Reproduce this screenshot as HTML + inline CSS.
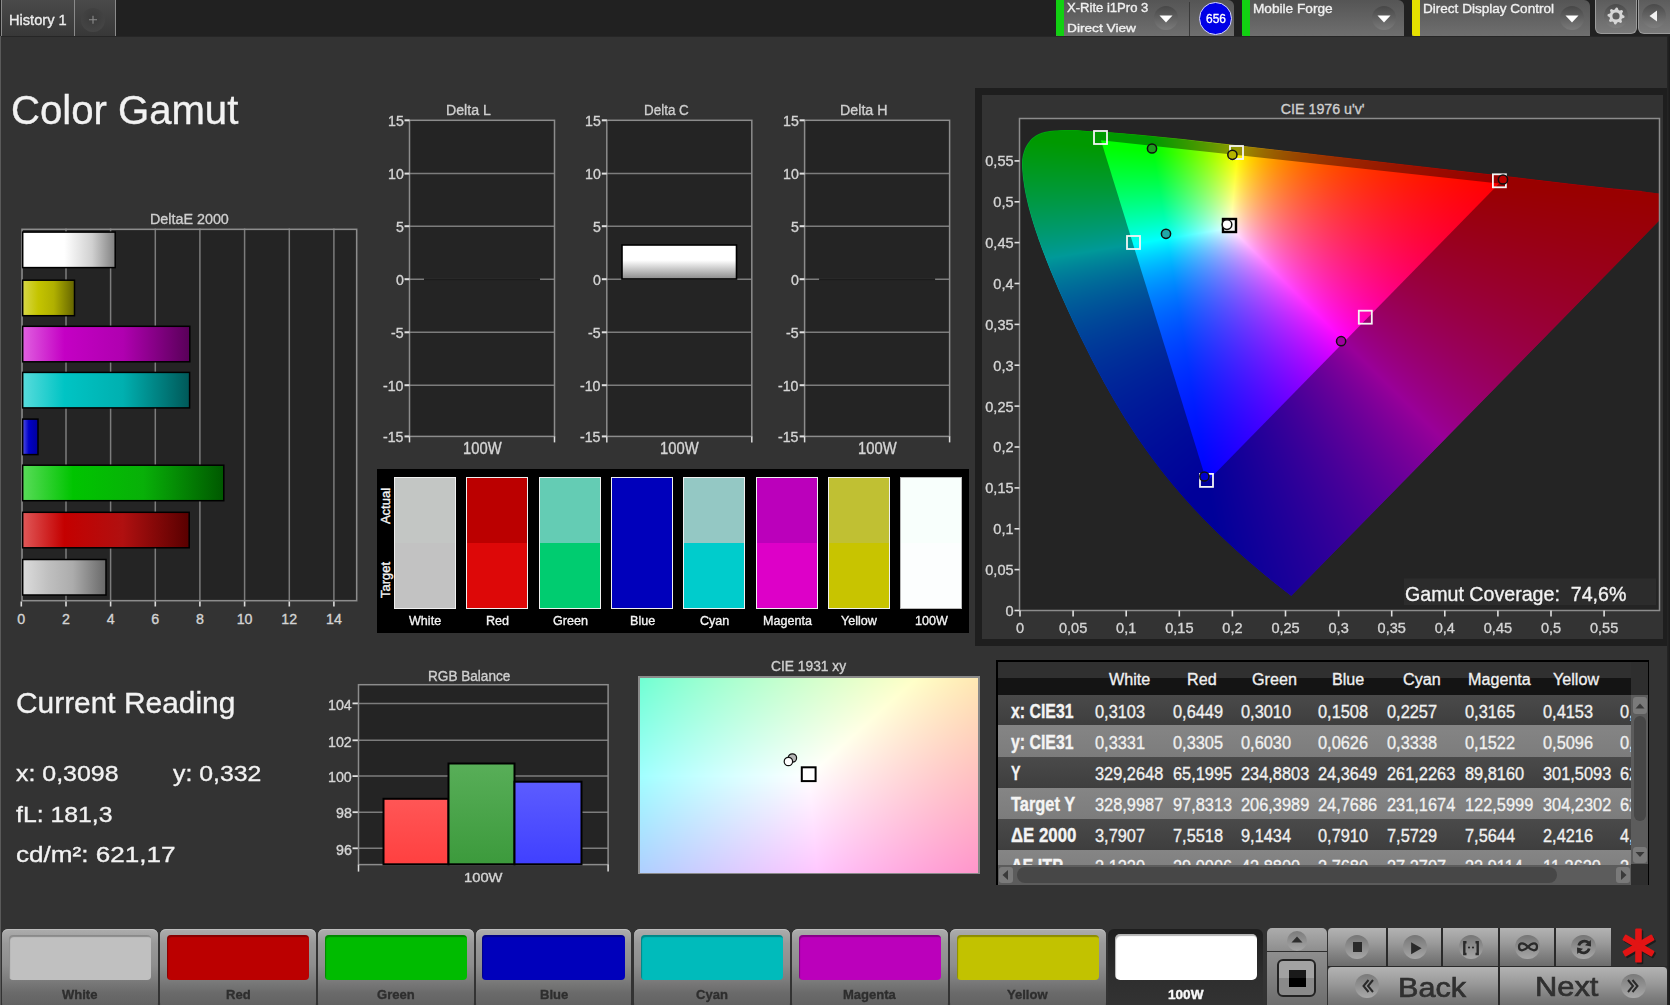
<!DOCTYPE html><html><head><meta charset="utf-8"><style>
*{margin:0;padding:0;box-sizing:border-box}
html,body{width:1670px;height:1005px;overflow:hidden;background:#333;font-family:"Liberation Sans",sans-serif}
.a{position:absolute}
.t{position:absolute;white-space:nowrap;-webkit-text-stroke-width:0.35px}
svg{position:absolute;left:0;top:0}
</style></head><body>
<div class="a" style="left:0;top:0;width:1670px;height:36px;background:#212121"></div>
<div class="a" style="left:0;top:36px;width:1670px;height:1px;background:#262626"></div>
<div class="a" style="left:0;top:36px;width:1px;height:969px;background:#5a5a5a"></div>
<div class="a" style="left:1px;top:-6px;width:115px;height:42px;border:1px solid #8a8a8a;border-bottom:none;border-radius:6px 6px 0 0;background:linear-gradient(#4c4c4c,#383838)"></div>
<div class="a" style="left:74px;top:0;width:1px;height:36px;background:#8a8a8a"></div>
<div class="a" style="left:81px;top:8px;width:24px;height:24px;border-radius:50%;background:radial-gradient(circle at 50% 40%,#3a3a3a,#444 70%,#4a4a4a)"></div>
<div class="t" style="left:9.30px;top:12.56px;font-size:14.10px;line-height:14.10px;color:#ececec;transform:scaleX(1.0373);transform-origin:0 0;">History 1</div>
<svg class="a" style="left:81px;top:8px" width="24" height="24"><path d="M12 7.8V15.8M8 11.8H16" stroke="#8c8c8c" stroke-width="1.1"/></svg>
<div class="a" style="left:1056px;top:0;width:178px;height:36px;border-radius:0 6px 0 0;background:linear-gradient(#555,#6f6f6f)"></div>
<div class="a" style="left:1056px;top:0;width:8px;height:36px;background:#12d012;border-radius:0 0 0 2px"></div>
<div class="a" style="left:1189px;top:2px;width:1px;height:34px;background:#3a3a3a"></div>
<div class="a" style="left:1153.5px;top:6.0px;width:24px;height:24px;border-radius:50%;background:linear-gradient(#474747,#7a7a7a)"></div>
<svg class="a" style="left:1158.5px;top:15.0px" width="14" height="8"><path d="M0.5 0.5H13.5L7 7.5Z" fill="#fff"/></svg>
<div class="t" style="left:1066.80px;top:3.31px;font-size:11.92px;line-height:11.92px;color:#f0f0f0;transform:scaleX(1.0972);transform-origin:0 0;">X-Rite i1Pro 3</div>
<div class="t" style="left:1067.00px;top:22.23px;font-size:11.77px;line-height:11.77px;color:#f0f0f0;transform:scaleX(1.1624);transform-origin:0 0;">Direct View</div>
<div class="a" style="left:1199px;top:1.5px;width:33px;height:33px;border-radius:50%;background:#0000e6;border:1.5px solid #d8d8ff"></div>
<div class="t" style="left:1205.50px;top:12.22px;font-size:13.08px;line-height:13.08px;color:#fff;transform:scaleX(0.9163);transform-origin:0 0;">656</div>
<div class="a" style="left:1242px;top:0;width:162px;height:36px;border-radius:0 6px 0 0;background:linear-gradient(#555,#6f6f6f)"></div>
<div class="a" style="left:1242px;top:0;width:8px;height:36px;background:#12d012;border-radius:0 0 0 2px"></div>
<div class="a" style="left:1372.2px;top:5.6px;width:24px;height:24px;border-radius:50%;background:linear-gradient(#474747,#7a7a7a)"></div>
<svg class="a" style="left:1377.2px;top:14.6px" width="14" height="8"><path d="M0.5 0.5H13.5L7 7.5Z" fill="#fff"/></svg>
<div class="t" style="left:1253.30px;top:2.79px;font-size:12.65px;line-height:12.65px;color:#f0f0f0;transform:scaleX(1.0800);transform-origin:0 0;">Mobile Forge</div>
<div class="a" style="left:1412px;top:0;width:178px;height:36px;border-radius:0 6px 0 0;background:linear-gradient(#555,#6f6f6f)"></div>
<div class="a" style="left:1412px;top:0;width:8px;height:36px;background:#e6e000;border-radius:0 0 0 2px"></div>
<div class="a" style="left:1559.5px;top:5.5px;width:24px;height:24px;border-radius:50%;background:linear-gradient(#474747,#7a7a7a)"></div>
<svg class="a" style="left:1564.5px;top:14.5px" width="14" height="8"><path d="M0.5 0.5H13.5L7 7.5Z" fill="#fff"/></svg>
<div class="t" style="left:1423.40px;top:2.75px;font-size:12.94px;line-height:12.94px;color:#f0f0f0;transform:scaleX(1.0473);transform-origin:0 0;">Direct Display Control</div>
<div class="a" style="left:1595px;top:0;width:42px;height:34px;border-radius:0 0 6px 6px;border:1px solid #9a9a9a;border-top:none;background:linear-gradient(#5c5c5c,#7a7a7a)"></div>
<div class="a" style="left:1638px;top:0;width:40px;height:34px;border-radius:0 0 6px 6px;border:1px solid #9a9a9a;border-top:none;background:linear-gradient(#5c5c5c,#7a7a7a)"></div>
<div class="a" style="left:1604px;top:4px;width:24px;height:24px;border-radius:50%;background:linear-gradient(#4a4a4a,#7e7e7e)"></div>
<div class="a" style="left:1642px;top:4px;width:24px;height:24px;border-radius:50%;background:linear-gradient(#4a4a4a,#7e7e7e)"></div>
<svg class="a" style="left:1604px;top:4px" width="24" height="24"><path d="M12.00 3.50L13.66 3.66L14.49 5.99L15.61 6.60L18.01 5.99L19.07 7.28L18.01 9.51L18.38 10.73L20.50 12.00L20.34 13.66L18.01 14.49L17.40 15.61L18.01 18.01L16.72 19.07L14.49 18.01L13.27 18.38L12.00 20.50L10.34 20.34L9.51 18.01L8.39 17.40L5.99 18.01L4.93 16.72L5.99 14.49L5.62 13.27L3.50 12.00L3.66 10.34L5.99 9.51L6.60 8.39L5.99 5.99L7.28 4.93L9.51 5.99L10.73 5.62Z" fill="#d6d6d6"/><circle cx="12" cy="12" r="3.6" fill="#5e5e5e"/></svg>
<svg class="a" style="left:1642px;top:4px" width="24" height="24"><path d="M7.5 12L15 6.5V17.5Z" fill="#f2f2f2"/></svg>
<div class="t" style="left:11.00px;top:89.92px;font-size:40.84px;line-height:40.84px;color:#f2f2f2;transform:scaleX(0.9822);transform-origin:0 0;">Color Gamut</div>
<div class="t" style="left:150.00px;top:212.15px;font-size:14.83px;line-height:14.83px;color:#cfcfcf;transform:scaleX(0.9657);transform-origin:0 0;">DeltaE 2000</div>
<svg width="1670" height="1005" style="left:0;top:0"><rect x="21.2" y="228.5" width="336.3" height="373.0" fill="#242424"/><line x1="66.0" y1="228.5" x2="66.0" y2="601.5" stroke="#7c7c7c" stroke-width="1.5"/><line x1="110.6" y1="228.5" x2="110.6" y2="601.5" stroke="#7c7c7c" stroke-width="1.5"/><line x1="155.3" y1="228.5" x2="155.3" y2="601.5" stroke="#7c7c7c" stroke-width="1.5"/><line x1="199.9" y1="228.5" x2="199.9" y2="601.5" stroke="#7c7c7c" stroke-width="1.5"/><line x1="244.6" y1="228.5" x2="244.6" y2="601.5" stroke="#7c7c7c" stroke-width="1.5"/><line x1="289.3" y1="228.5" x2="289.3" y2="601.5" stroke="#7c7c7c" stroke-width="1.5"/><line x1="333.9" y1="228.5" x2="333.9" y2="601.5" stroke="#7c7c7c" stroke-width="1.5"/><rect x="22.0" y="229.3" width="334.7" height="371.4" fill="none" stroke="#8c8c8c" stroke-width="1.6"/><line x1="21.3" y1="601.5" x2="21.3" y2="606.5" stroke="#dcdcdc" stroke-width="1.6"/><line x1="66.0" y1="601.5" x2="66.0" y2="606.5" stroke="#dcdcdc" stroke-width="1.6"/><line x1="110.6" y1="601.5" x2="110.6" y2="606.5" stroke="#dcdcdc" stroke-width="1.6"/><line x1="155.3" y1="601.5" x2="155.3" y2="606.5" stroke="#dcdcdc" stroke-width="1.6"/><line x1="199.9" y1="601.5" x2="199.9" y2="606.5" stroke="#dcdcdc" stroke-width="1.6"/><line x1="244.6" y1="601.5" x2="244.6" y2="606.5" stroke="#dcdcdc" stroke-width="1.6"/><line x1="289.3" y1="601.5" x2="289.3" y2="606.5" stroke="#dcdcdc" stroke-width="1.6"/><line x1="333.9" y1="601.5" x2="333.9" y2="606.5" stroke="#dcdcdc" stroke-width="1.6"/><defs><linearGradient id="g232" x1="0" x2="1" y1="0" y2="0"><stop offset="0%" stop-color="#ffffff"/><stop offset="45%" stop-color="#ffffff"/><stop offset="75%" stop-color="#d0d0d0"/><stop offset="100%" stop-color="#808080"/></linearGradient></defs><rect x="22.7" y="232.1" width="92.5" height="35.5" fill="url(#g232)" stroke="#000" stroke-width="1.5"/><defs><linearGradient id="g280" x1="0" x2="1" y1="0" y2="0"><stop offset="0%" stop-color="#d8d848"/><stop offset="30%" stop-color="#c4c400"/><stop offset="60%" stop-color="#b0b000"/><stop offset="100%" stop-color="#646400"/></linearGradient></defs><rect x="22.7" y="280.2" width="51.8" height="35.5" fill="url(#g280)" stroke="#000" stroke-width="1.5"/><defs><linearGradient id="g326" x1="0" x2="1" y1="0" y2="0"><stop offset="0%" stop-color="#e060e0"/><stop offset="25%" stop-color="#c400c4"/><stop offset="60%" stop-color="#b000b0"/><stop offset="100%" stop-color="#580058"/></linearGradient></defs><rect x="22.7" y="326.3" width="167.1" height="35.5" fill="url(#g326)" stroke="#000" stroke-width="1.5"/><defs><linearGradient id="g372" x1="0" x2="1" y1="0" y2="0"><stop offset="0%" stop-color="#58dcdc"/><stop offset="25%" stop-color="#00c4c4"/><stop offset="60%" stop-color="#00b0b0"/><stop offset="100%" stop-color="#005858"/></linearGradient></defs><rect x="22.7" y="372.4" width="166.9" height="35.5" fill="url(#g372)" stroke="#000" stroke-width="1.5"/><defs><linearGradient id="g419" x1="0" x2="1" y1="0" y2="0"><stop offset="0%" stop-color="#5050e0"/><stop offset="40%" stop-color="#0000c8"/><stop offset="100%" stop-color="#00009a"/></linearGradient></defs><rect x="22.7" y="419.1" width="15.3" height="35.5" fill="url(#g419)" stroke="#000" stroke-width="1.5"/><defs><linearGradient id="g465" x1="0" x2="1" y1="0" y2="0"><stop offset="0%" stop-color="#58dc58"/><stop offset="25%" stop-color="#00c400"/><stop offset="60%" stop-color="#08b008"/><stop offset="100%" stop-color="#005800"/></linearGradient></defs><rect x="22.7" y="465.2" width="201.1" height="35.5" fill="url(#g465)" stroke="#000" stroke-width="1.5"/><defs><linearGradient id="g512" x1="0" x2="1" y1="0" y2="0"><stop offset="0%" stop-color="#e05858"/><stop offset="25%" stop-color="#c40000"/><stop offset="60%" stop-color="#b01010"/><stop offset="100%" stop-color="#580000"/></linearGradient></defs><rect x="22.7" y="512.3" width="166.5" height="35.5" fill="url(#g512)" stroke="#000" stroke-width="1.5"/><defs><linearGradient id="g559" x1="0" x2="1" y1="0" y2="0"><stop offset="0%" stop-color="#dcdcdc"/><stop offset="30%" stop-color="#c0c0c0"/><stop offset="60%" stop-color="#acacac"/><stop offset="100%" stop-color="#686868"/></linearGradient></defs><rect x="22.7" y="559.5" width="83.3" height="35.5" fill="url(#g559)" stroke="#000" stroke-width="1.5"/></svg>
<div class="t" style="left:17.35px;top:611.84px;font-size:14.24px;line-height:14.24px;color:#d4d4d4;">0</div>
<div class="t" style="left:62.01px;top:611.84px;font-size:14.24px;line-height:14.24px;color:#d4d4d4;">2</div>
<div class="t" style="left:106.67px;top:611.84px;font-size:14.24px;line-height:14.24px;color:#d4d4d4;">4</div>
<div class="t" style="left:151.33px;top:611.84px;font-size:14.24px;line-height:14.24px;color:#d4d4d4;">6</div>
<div class="t" style="left:195.99px;top:611.84px;font-size:14.24px;line-height:14.24px;color:#d4d4d4;">8</div>
<div class="t" style="left:236.70px;top:611.84px;font-size:14.24px;line-height:14.24px;color:#d4d4d4;">10</div>
<div class="t" style="left:281.36px;top:611.84px;font-size:14.24px;line-height:14.24px;color:#d4d4d4;">12</div>
<div class="t" style="left:326.02px;top:611.84px;font-size:14.24px;line-height:14.24px;color:#d4d4d4;">14</div>
<svg width="1670" height="1005" style="left:0;top:0"><rect x="409.5" y="120.3" width="145.0" height="316.1" fill="#242424"/><line x1="409.5" y1="173.6" x2="554.5" y2="173.6" stroke="#7c7c7c" stroke-width="1.5"/><line x1="409.5" y1="226.2" x2="554.5" y2="226.2" stroke="#7c7c7c" stroke-width="1.5"/><line x1="409.5" y1="279.2" x2="554.5" y2="279.2" stroke="#7c7c7c" stroke-width="1.5"/><line x1="409.5" y1="332.3" x2="554.5" y2="332.3" stroke="#7c7c7c" stroke-width="1.5"/><line x1="409.5" y1="385.2" x2="554.5" y2="385.2" stroke="#7c7c7c" stroke-width="1.5"/><rect x="409.5" y="120.3" width="145.0" height="316.1" fill="none" stroke="#8c8c8c" stroke-width="1.5"/><line x1="404.5" y1="120.3" x2="409.5" y2="120.3" stroke="#e0e0e0" stroke-width="2"/><line x1="404.5" y1="173.6" x2="409.5" y2="173.6" stroke="#e0e0e0" stroke-width="2"/><line x1="404.5" y1="226.2" x2="409.5" y2="226.2" stroke="#e0e0e0" stroke-width="2"/><line x1="404.5" y1="279.2" x2="409.5" y2="279.2" stroke="#e0e0e0" stroke-width="2"/><line x1="404.5" y1="332.3" x2="409.5" y2="332.3" stroke="#e0e0e0" stroke-width="2"/><line x1="404.5" y1="385.2" x2="409.5" y2="385.2" stroke="#e0e0e0" stroke-width="2"/><line x1="404.5" y1="436.4" x2="409.5" y2="436.4" stroke="#e0e0e0" stroke-width="2"/><line x1="409.5" y1="436.4" x2="409.5" y2="442.4" stroke="#dcdcdc" stroke-width="1.5"/><line x1="554.5" y1="436.4" x2="554.5" y2="442.4" stroke="#dcdcdc" stroke-width="1.5"/><line x1="424.0" y1="279.2" x2="540.0" y2="279.2" stroke="#1c1c1c" stroke-width="2"/><rect x="606.8" y="120.3" width="145.0" height="316.1" fill="#242424"/><line x1="606.8" y1="173.6" x2="751.8" y2="173.6" stroke="#7c7c7c" stroke-width="1.5"/><line x1="606.8" y1="226.2" x2="751.8" y2="226.2" stroke="#7c7c7c" stroke-width="1.5"/><line x1="606.8" y1="279.2" x2="751.8" y2="279.2" stroke="#7c7c7c" stroke-width="1.5"/><line x1="606.8" y1="332.3" x2="751.8" y2="332.3" stroke="#7c7c7c" stroke-width="1.5"/><line x1="606.8" y1="385.2" x2="751.8" y2="385.2" stroke="#7c7c7c" stroke-width="1.5"/><rect x="606.8" y="120.3" width="145.0" height="316.1" fill="none" stroke="#8c8c8c" stroke-width="1.5"/><line x1="601.8" y1="120.3" x2="606.8" y2="120.3" stroke="#e0e0e0" stroke-width="2"/><line x1="601.8" y1="173.6" x2="606.8" y2="173.6" stroke="#e0e0e0" stroke-width="2"/><line x1="601.8" y1="226.2" x2="606.8" y2="226.2" stroke="#e0e0e0" stroke-width="2"/><line x1="601.8" y1="279.2" x2="606.8" y2="279.2" stroke="#e0e0e0" stroke-width="2"/><line x1="601.8" y1="332.3" x2="606.8" y2="332.3" stroke="#e0e0e0" stroke-width="2"/><line x1="601.8" y1="385.2" x2="606.8" y2="385.2" stroke="#e0e0e0" stroke-width="2"/><line x1="601.8" y1="436.4" x2="606.8" y2="436.4" stroke="#e0e0e0" stroke-width="2"/><line x1="606.8" y1="436.4" x2="606.8" y2="442.4" stroke="#dcdcdc" stroke-width="1.5"/><line x1="751.8" y1="436.4" x2="751.8" y2="442.4" stroke="#dcdcdc" stroke-width="1.5"/><rect x="804.6" y="120.3" width="145.0" height="316.1" fill="#242424"/><line x1="804.6" y1="173.6" x2="949.6" y2="173.6" stroke="#7c7c7c" stroke-width="1.5"/><line x1="804.6" y1="226.2" x2="949.6" y2="226.2" stroke="#7c7c7c" stroke-width="1.5"/><line x1="804.6" y1="279.2" x2="949.6" y2="279.2" stroke="#7c7c7c" stroke-width="1.5"/><line x1="804.6" y1="332.3" x2="949.6" y2="332.3" stroke="#7c7c7c" stroke-width="1.5"/><line x1="804.6" y1="385.2" x2="949.6" y2="385.2" stroke="#7c7c7c" stroke-width="1.5"/><rect x="804.6" y="120.3" width="145.0" height="316.1" fill="none" stroke="#8c8c8c" stroke-width="1.5"/><line x1="799.6" y1="120.3" x2="804.6" y2="120.3" stroke="#e0e0e0" stroke-width="2"/><line x1="799.6" y1="173.6" x2="804.6" y2="173.6" stroke="#e0e0e0" stroke-width="2"/><line x1="799.6" y1="226.2" x2="804.6" y2="226.2" stroke="#e0e0e0" stroke-width="2"/><line x1="799.6" y1="279.2" x2="804.6" y2="279.2" stroke="#e0e0e0" stroke-width="2"/><line x1="799.6" y1="332.3" x2="804.6" y2="332.3" stroke="#e0e0e0" stroke-width="2"/><line x1="799.6" y1="385.2" x2="804.6" y2="385.2" stroke="#e0e0e0" stroke-width="2"/><line x1="799.6" y1="436.4" x2="804.6" y2="436.4" stroke="#e0e0e0" stroke-width="2"/><line x1="804.6" y1="436.4" x2="804.6" y2="442.4" stroke="#dcdcdc" stroke-width="1.5"/><line x1="949.6" y1="436.4" x2="949.6" y2="442.4" stroke="#dcdcdc" stroke-width="1.5"/><line x1="819.1" y1="279.2" x2="935.1" y2="279.2" stroke="#1c1c1c" stroke-width="2"/><defs><linearGradient id="dc" x1="0" x2="0" y1="0" y2="1"><stop offset="0" stop-color="#fff"/><stop offset="0.45" stop-color="#fff"/><stop offset="1" stop-color="#8a8a8a"/></linearGradient></defs><rect x="622" y="245" width="114.5" height="34" fill="url(#dc)" stroke="#000" stroke-width="1.6"/></svg>
<div class="t" style="left:446.30px;top:103.35px;font-size:14.83px;line-height:14.83px;color:#cfcfcf;transform:scaleX(0.9537);transform-origin:0 0;">Delta L</div>
<div class="t" style="left:462.70px;top:440.71px;font-size:15.70px;line-height:15.70px;color:#d4d4d4;transform:scaleX(0.9413);transform-origin:0 0;">100W</div>
<div class="t" style="left:387.71px;top:114.12px;font-size:14.39px;line-height:14.39px;color:#d4d4d4;transform:scaleX(0.9868);transform-origin:0 0;">15</div>
<div class="t" style="left:387.71px;top:167.42px;font-size:14.39px;line-height:14.39px;color:#d4d4d4;transform:scaleX(0.9868);transform-origin:0 0;">10</div>
<div class="t" style="left:395.60px;top:220.02px;font-size:14.39px;line-height:14.39px;color:#d4d4d4;transform:scaleX(0.9868);transform-origin:0 0;">5</div>
<div class="t" style="left:395.60px;top:273.02px;font-size:14.39px;line-height:14.39px;color:#d4d4d4;transform:scaleX(0.9868);transform-origin:0 0;">0</div>
<div class="t" style="left:390.87px;top:326.12px;font-size:14.39px;line-height:14.39px;color:#d4d4d4;transform:scaleX(0.9868);transform-origin:0 0;">-5</div>
<div class="t" style="left:382.98px;top:379.02px;font-size:14.39px;line-height:14.39px;color:#d4d4d4;transform:scaleX(0.9868);transform-origin:0 0;">-10</div>
<div class="t" style="left:382.98px;top:430.22px;font-size:14.39px;line-height:14.39px;color:#d4d4d4;transform:scaleX(0.9868);transform-origin:0 0;">-15</div>
<div class="t" style="left:643.60px;top:103.35px;font-size:14.83px;line-height:14.83px;color:#cfcfcf;transform:scaleX(0.9062);transform-origin:0 0;">Delta C</div>
<div class="t" style="left:660.00px;top:440.71px;font-size:15.70px;line-height:15.70px;color:#d4d4d4;transform:scaleX(0.9413);transform-origin:0 0;">100W</div>
<div class="t" style="left:585.01px;top:114.12px;font-size:14.39px;line-height:14.39px;color:#d4d4d4;transform:scaleX(0.9868);transform-origin:0 0;">15</div>
<div class="t" style="left:585.01px;top:167.42px;font-size:14.39px;line-height:14.39px;color:#d4d4d4;transform:scaleX(0.9868);transform-origin:0 0;">10</div>
<div class="t" style="left:592.90px;top:220.02px;font-size:14.39px;line-height:14.39px;color:#d4d4d4;transform:scaleX(0.9868);transform-origin:0 0;">5</div>
<div class="t" style="left:592.90px;top:273.02px;font-size:14.39px;line-height:14.39px;color:#d4d4d4;transform:scaleX(0.9868);transform-origin:0 0;">0</div>
<div class="t" style="left:588.17px;top:326.12px;font-size:14.39px;line-height:14.39px;color:#d4d4d4;transform:scaleX(0.9868);transform-origin:0 0;">-5</div>
<div class="t" style="left:580.28px;top:379.02px;font-size:14.39px;line-height:14.39px;color:#d4d4d4;transform:scaleX(0.9868);transform-origin:0 0;">-10</div>
<div class="t" style="left:580.28px;top:430.22px;font-size:14.39px;line-height:14.39px;color:#d4d4d4;transform:scaleX(0.9868);transform-origin:0 0;">-15</div>
<div class="t" style="left:840.05px;top:103.35px;font-size:14.83px;line-height:14.83px;color:#cfcfcf;transform:scaleX(0.9608);transform-origin:0 0;">Delta H</div>
<div class="t" style="left:857.80px;top:440.71px;font-size:15.70px;line-height:15.70px;color:#d4d4d4;transform:scaleX(0.9413);transform-origin:0 0;">100W</div>
<div class="t" style="left:782.81px;top:114.12px;font-size:14.39px;line-height:14.39px;color:#d4d4d4;transform:scaleX(0.9868);transform-origin:0 0;">15</div>
<div class="t" style="left:782.81px;top:167.42px;font-size:14.39px;line-height:14.39px;color:#d4d4d4;transform:scaleX(0.9868);transform-origin:0 0;">10</div>
<div class="t" style="left:790.70px;top:220.02px;font-size:14.39px;line-height:14.39px;color:#d4d4d4;transform:scaleX(0.9868);transform-origin:0 0;">5</div>
<div class="t" style="left:790.70px;top:273.02px;font-size:14.39px;line-height:14.39px;color:#d4d4d4;transform:scaleX(0.9868);transform-origin:0 0;">0</div>
<div class="t" style="left:785.97px;top:326.12px;font-size:14.39px;line-height:14.39px;color:#d4d4d4;transform:scaleX(0.9868);transform-origin:0 0;">-5</div>
<div class="t" style="left:778.08px;top:379.02px;font-size:14.39px;line-height:14.39px;color:#d4d4d4;transform:scaleX(0.9868);transform-origin:0 0;">-10</div>
<div class="t" style="left:778.08px;top:430.22px;font-size:14.39px;line-height:14.39px;color:#d4d4d4;transform:scaleX(0.9868);transform-origin:0 0;">-15</div>
<div class="a" style="left:377px;top:469px;width:592px;height:163.5px;background:#000"></div>
<div class="a" style="left:394.1px;top:477.3px;width:61.9px;height:131.3px;border:1.3px solid #f0f0f0;background:linear-gradient(#c3c6c4 50%,#c2c2c2 50%)"></div>
<div class="t" style="left:408.98px;top:613.65px;font-size:13.52px;line-height:13.52px;color:#f4f4f4;transform:scaleX(0.9300);transform-origin:0 0;">White</div>
<div class="a" style="left:466.2px;top:477.3px;width:61.9px;height:131.3px;border:1.3px solid #f0f0f0;background:linear-gradient(#bb0000 50%,#dd0808 50%)"></div>
<div class="t" style="left:485.62px;top:613.65px;font-size:13.52px;line-height:13.52px;color:#f4f4f4;transform:scaleX(0.9300);transform-origin:0 0;">Red</div>
<div class="a" style="left:539.3px;top:477.3px;width:61.9px;height:131.3px;border:1.3px solid #f0f0f0;background:linear-gradient(#64ccb4 50%,#00cc70 50%)"></div>
<div class="t" style="left:552.78px;top:613.65px;font-size:13.52px;line-height:13.52px;color:#f4f4f4;transform:scaleX(0.9300);transform-origin:0 0;">Green</div>
<div class="a" style="left:611.3px;top:477.3px;width:61.9px;height:131.3px;border:1.3px solid #f0f0f0;background:linear-gradient(#0000bb 50%,#0000bb 50%)"></div>
<div class="t" style="left:629.67px;top:613.65px;font-size:13.52px;line-height:13.52px;color:#f4f4f4;transform:scaleX(0.9300);transform-origin:0 0;">Blue</div>
<div class="a" style="left:683.4px;top:477.3px;width:61.9px;height:131.3px;border:1.3px solid #f0f0f0;background:linear-gradient(#94c8c4 50%,#00cccc 50%)"></div>
<div class="t" style="left:699.68px;top:613.65px;font-size:13.52px;line-height:13.52px;color:#f4f4f4;transform:scaleX(0.9300);transform-origin:0 0;">Cyan</div>
<div class="a" style="left:756.3px;top:477.3px;width:61.9px;height:131.3px;border:1.3px solid #f0f0f0;background:linear-gradient(#bb00bb 50%,#dd00c8 50%)"></div>
<div class="t" style="left:762.79px;top:613.65px;font-size:13.52px;line-height:13.52px;color:#f4f4f4;transform:scaleX(0.9300);transform-origin:0 0;">Magenta</div>
<div class="a" style="left:828.2px;top:477.3px;width:61.9px;height:131.3px;border:1.3px solid #f0f0f0;background:linear-gradient(#c0c033 50%,#c8c400 50%)"></div>
<div class="t" style="left:840.63px;top:613.65px;font-size:13.52px;line-height:13.52px;color:#f4f4f4;transform:scaleX(0.9300);transform-origin:0 0;">Yellow</div>
<div class="a" style="left:900.2px;top:477.3px;width:61.9px;height:131.3px;border:1.3px solid #b8b8b8;background:linear-gradient(#f8fffc 50%,#fcfefe 50%)"></div>
<div class="t" style="left:914.73px;top:613.65px;font-size:13.52px;line-height:13.52px;color:#f4f4f4;transform:scaleX(0.9300);transform-origin:0 0;">100W</div>
<div class="t" style="left:385.3px;top:506px;font-size:13px;line-height:13px;color:#f4f4f4;transform:translate(-50%,-50%) rotate(-90deg)">Actual</div>
<div class="t" style="left:385.3px;top:580px;font-size:13px;line-height:13px;color:#f4f4f4;transform:translate(-50%,-50%) rotate(-90deg)">Target</div>
<div class="a" style="left:975px;top:88px;width:695px;height:558px;background:#1e1e1e"></div>
<div class="a" style="left:982px;top:95px;width:681px;height:544px;background:#333"></div>
<div class="t" style="left:1280.80px;top:101.54px;font-size:14.24px;line-height:14.24px;color:#cfcfcf;">CIE 1976 u'v'</div>
<div class="a" style="left:1019.5px;top:118.5px;width:640.0px;height:492.0px;background:#242424"></div>
<div class="a" style="left:1019.5px;top:118.5px;width:640px;height:492px;overflow:hidden"><div class="a" style="left:0;top:0;width:640px;height:492px;background:radial-gradient(circle at 210.0px 106.0px,#fff 0,rgba(255,255,255,.85) 8px,rgba(255,255,255,.35) 40px,rgba(255,255,255,0) 110px),conic-gradient(from 0deg at 210.0px 106.0px,#ffff00 3deg,#ff7000 40deg,#ff0000 81deg,#ff00a0 110deg,#ff00ff 136deg,#8000ff 160deg,#0000ff 185deg,#0060ff 230deg,#00ffff 258deg,#00ff80 280deg,#00ff00 303deg,#a0ff00 340deg,#ffff00 363deg);clip-path:polygon(271.5px 477.1px,266.3px 473.1px,261.2px 469.1px,256.1px 465.1px,251.1px 461.1px,246.2px 457.1px,241.4px 453.1px,236.6px 449.1px,231.9px 445.1px,227.3px 441.1px,222.7px 437.1px,218.2px 433.1px,213.8px 429.1px,209.5px 425.1px,205.2px 421.1px,201.0px 417.1px,196.8px 413.1px,192.8px 409.1px,188.8px 405.1px,184.8px 401.1px,181.0px 397.1px,177.2px 393.1px,173.4px 389.1px,169.8px 385.1px,166.2px 381.1px,162.7px 377.1px,159.2px 373.1px,155.8px 369.1px,152.4px 365.1px,149.1px 361.1px,145.9px 357.1px,142.7px 353.1px,139.6px 349.1px,136.6px 345.1px,133.6px 341.1px,130.6px 337.1px,127.7px 333.1px,124.9px 329.1px,122.1px 325.1px,119.3px 321.1px,116.6px 317.1px,114.0px 313.1px,111.3px 309.1px,108.8px 305.1px,106.2px 301.1px,103.7px 297.1px,101.3px 293.1px,98.9px 289.1px,96.5px 285.1px,94.1px 281.1px,91.8px 277.1px,89.5px 273.1px,87.3px 269.1px,85.0px 265.1px,82.8px 261.1px,80.7px 257.1px,78.5px 253.1px,76.4px 249.1px,74.3px 245.1px,72.2px 241.1px,70.2px 237.1px,68.2px 233.1px,66.2px 229.1px,64.2px 225.1px,62.2px 221.1px,60.2px 217.1px,58.3px 213.1px,56.4px 209.1px,54.5px 205.1px,52.6px 201.1px,50.8px 197.1px,48.9px 193.1px,47.1px 189.1px,45.3px 185.1px,43.5px 181.1px,41.7px 177.1px,39.9px 173.1px,38.2px 169.1px,36.5px 165.1px,34.8px 161.1px,33.1px 157.1px,31.4px 153.1px,29.8px 149.1px,28.2px 145.1px,26.6px 141.1px,25.1px 137.1px,23.5px 133.1px,22.0px 129.1px,20.6px 125.1px,19.1px 121.1px,17.8px 117.1px,16.4px 113.1px,15.1px 109.1px,13.8px 105.1px,12.6px 101.1px,11.4px 97.1px,10.3px 93.1px,9.2px 89.1px,8.2px 85.1px,7.3px 81.1px,6.4px 77.1px,5.6px 73.1px,4.9px 69.1px,4.3px 65.1px,3.7px 61.1px,3.2px 57.1px,2.9px 53.1px,2.6px 49.1px,2.5px 46.3px,2.5px 44.1px,2.6px 41.4px,3.0px 38.6px,3.7px 35.5px,4.6px 32.4px,5.6px 29.7px,6.9px 27.2px,8.3px 24.9px,10.0px 22.7px,11.8px 20.6px,13.9px 18.7px,16.4px 17.0px,19.1px 15.5px,22.2px 14.3px,25.9px 13.3px,30.2px 12.6px,34.9px 12.1px,39.9px 11.7px,45.4px 11.5px,51.0px 11.5px,56.5px 11.6px,62.3px 12.0px,67.2px 12.4px,84.6px 13.3px,120.2px 16.2px,163.1px 20.6px,215.7px 26.5px,279.1px 33.8px,352.6px 42.3px,429.0px 51.1px,498.8px 59.1px,553.0px 65.4px,591.5px 69.8px,622.9px 72.5px,271.1px 477.1px);filter:brightness(0.6)"></div><div class="a" style="left:0;top:0;width:640px;height:492px;background:radial-gradient(circle at 210.0px 106.0px,#fff 0,rgba(255,255,255,.85) 8px,rgba(255,255,255,.35) 40px,rgba(255,255,255,0) 110px),conic-gradient(from 0deg at 210.0px 106.0px,#ffff00 3deg,#ff7000 40deg,#ff0000 81deg,#ff00a0 110deg,#ff00ff 136deg,#8000ff 160deg,#0000ff 185deg,#0060ff 230deg,#00ffff 258deg,#00ff80 280deg,#00ff00 303deg,#a0ff00 340deg,#ffff00 363deg);clip-path:polygon(80.9px 21.4px,186.8px 362.9px,479.1px 64.5px)"></div></div>
<canvas id="cie" class="a" width="640" height="492" style="left:1019.5px;top:118.5px;width:640px;height:492px"></canvas>
<svg width="1670" height="1005" style="left:0;top:0"><rect x="1019.5" y="118.5" width="640.0" height="492.0" fill="none" stroke="#8c8c8c" stroke-width="1.5"/><line x1="1014.5" y1="610.5" x2="1019.5" y2="610.5" stroke="#e0e0e0" stroke-width="1.6"/><line x1="1020.0" y1="610.5" x2="1020.0" y2="616.5" stroke="#e0e0e0" stroke-width="1.6"/><line x1="1014.5" y1="569.6" x2="1019.5" y2="569.6" stroke="#e0e0e0" stroke-width="1.6"/><line x1="1073.1" y1="610.5" x2="1073.1" y2="616.5" stroke="#e0e0e0" stroke-width="1.6"/><line x1="1014.5" y1="528.8" x2="1019.5" y2="528.8" stroke="#e0e0e0" stroke-width="1.6"/><line x1="1126.2" y1="610.5" x2="1126.2" y2="616.5" stroke="#e0e0e0" stroke-width="1.6"/><line x1="1014.5" y1="487.9" x2="1019.5" y2="487.9" stroke="#e0e0e0" stroke-width="1.6"/><line x1="1179.3" y1="610.5" x2="1179.3" y2="616.5" stroke="#e0e0e0" stroke-width="1.6"/><line x1="1014.5" y1="447.0" x2="1019.5" y2="447.0" stroke="#e0e0e0" stroke-width="1.6"/><line x1="1232.4" y1="610.5" x2="1232.4" y2="616.5" stroke="#e0e0e0" stroke-width="1.6"/><line x1="1014.5" y1="406.1" x2="1019.5" y2="406.1" stroke="#e0e0e0" stroke-width="1.6"/><line x1="1285.5" y1="610.5" x2="1285.5" y2="616.5" stroke="#e0e0e0" stroke-width="1.6"/><line x1="1014.5" y1="365.2" x2="1019.5" y2="365.2" stroke="#e0e0e0" stroke-width="1.6"/><line x1="1338.6" y1="610.5" x2="1338.6" y2="616.5" stroke="#e0e0e0" stroke-width="1.6"/><line x1="1014.5" y1="324.4" x2="1019.5" y2="324.4" stroke="#e0e0e0" stroke-width="1.6"/><line x1="1391.7" y1="610.5" x2="1391.7" y2="616.5" stroke="#e0e0e0" stroke-width="1.6"/><line x1="1014.5" y1="283.5" x2="1019.5" y2="283.5" stroke="#e0e0e0" stroke-width="1.6"/><line x1="1444.8" y1="610.5" x2="1444.8" y2="616.5" stroke="#e0e0e0" stroke-width="1.6"/><line x1="1014.5" y1="242.6" x2="1019.5" y2="242.6" stroke="#e0e0e0" stroke-width="1.6"/><line x1="1497.9" y1="610.5" x2="1497.9" y2="616.5" stroke="#e0e0e0" stroke-width="1.6"/><line x1="1014.5" y1="201.8" x2="1019.5" y2="201.8" stroke="#e0e0e0" stroke-width="1.6"/><line x1="1551.0" y1="610.5" x2="1551.0" y2="616.5" stroke="#e0e0e0" stroke-width="1.6"/><line x1="1014.5" y1="160.9" x2="1019.5" y2="160.9" stroke="#e0e0e0" stroke-width="1.6"/><line x1="1604.1" y1="610.5" x2="1604.1" y2="616.5" stroke="#e0e0e0" stroke-width="1.6"/><rect x="1404" y="578.5" width="252" height="26.5" fill="#2c2c2c"/><rect x="1094.0" y="131.0" width="13" height="13" fill="none" stroke="#f4f4f4" stroke-width="1.8"/><rect x="1230.0" y="146.0" width="13" height="13" fill="none" stroke="#f4f4f4" stroke-width="1.8"/><rect x="1492.9" y="174.3" width="13" height="13" fill="none" stroke="#f4f4f4" stroke-width="1.8"/><rect x="1127.0" y="236.0" width="13" height="13" fill="none" stroke="#f4f4f4" stroke-width="1.8"/><rect x="1358.8" y="310.7" width="13" height="13" fill="none" stroke="#f4f4f4" stroke-width="1.8"/><rect x="1200.0" y="473.9" width="13" height="13" fill="none" stroke="#f4f4f4" stroke-width="1.8"/><circle cx="1152.0" cy="148.5" r="4.6" fill="#1f9a1f" stroke="#111" stroke-width="1.5"/><circle cx="1232.4" cy="154.8" r="4.6" fill="#b4b400" stroke="#111" stroke-width="1.5"/><circle cx="1503.0" cy="179.5" r="4.6" fill="#bb0000" stroke="#111" stroke-width="1.5"/><circle cx="1166.0" cy="233.8" r="4.6" fill="#20a8a8" stroke="#111" stroke-width="1.5"/><circle cx="1341.1" cy="341.2" r="4.6" fill="#a000a0" stroke="#111" stroke-width="1.5"/><circle cx="1204.4" cy="476.5" r="4.6" fill="#0000cc" stroke="#111" stroke-width="1.5"/><rect x="1223" y="219" width="13" height="13" fill="#f8f8f8" stroke="#000" stroke-width="2.4"/><circle cx="1227" cy="224.6" r="4.8" fill="#fff" stroke="#111" stroke-width="1.5"/></svg>
<div class="t" style="left:1005.44px;top:603.99px;font-size:14.54px;line-height:14.54px;color:#d4d4d4;">0</div>
<div class="t" style="left:1015.97px;top:620.89px;font-size:14.54px;line-height:14.54px;color:#d4d4d4;">0</div>
<div class="t" style="left:985.28px;top:563.12px;font-size:14.54px;line-height:14.54px;color:#d4d4d4;">0,05</div>
<div class="t" style="left:1058.99px;top:620.89px;font-size:14.54px;line-height:14.54px;color:#d4d4d4;">0,05</div>
<div class="t" style="left:993.34px;top:522.24px;font-size:14.54px;line-height:14.54px;color:#d4d4d4;">0,1</div>
<div class="t" style="left:1116.12px;top:620.89px;font-size:14.54px;line-height:14.54px;color:#d4d4d4;">0,1</div>
<div class="t" style="left:985.28px;top:481.37px;font-size:14.54px;line-height:14.54px;color:#d4d4d4;">0,15</div>
<div class="t" style="left:1165.19px;top:620.89px;font-size:14.54px;line-height:14.54px;color:#d4d4d4;">0,15</div>
<div class="t" style="left:993.34px;top:440.49px;font-size:14.54px;line-height:14.54px;color:#d4d4d4;">0,2</div>
<div class="t" style="left:1222.32px;top:620.89px;font-size:14.54px;line-height:14.54px;color:#d4d4d4;">0,2</div>
<div class="t" style="left:985.28px;top:399.62px;font-size:14.54px;line-height:14.54px;color:#d4d4d4;">0,25</div>
<div class="t" style="left:1271.39px;top:620.89px;font-size:14.54px;line-height:14.54px;color:#d4d4d4;">0,25</div>
<div class="t" style="left:993.34px;top:358.74px;font-size:14.54px;line-height:14.54px;color:#d4d4d4;">0,3</div>
<div class="t" style="left:1328.52px;top:620.89px;font-size:14.54px;line-height:14.54px;color:#d4d4d4;">0,3</div>
<div class="t" style="left:985.28px;top:317.87px;font-size:14.54px;line-height:14.54px;color:#d4d4d4;">0,35</div>
<div class="t" style="left:1377.59px;top:620.89px;font-size:14.54px;line-height:14.54px;color:#d4d4d4;">0,35</div>
<div class="t" style="left:993.34px;top:276.99px;font-size:14.54px;line-height:14.54px;color:#d4d4d4;">0,4</div>
<div class="t" style="left:1434.72px;top:620.89px;font-size:14.54px;line-height:14.54px;color:#d4d4d4;">0,4</div>
<div class="t" style="left:985.28px;top:236.12px;font-size:14.54px;line-height:14.54px;color:#d4d4d4;">0,45</div>
<div class="t" style="left:1483.79px;top:620.89px;font-size:14.54px;line-height:14.54px;color:#d4d4d4;">0,45</div>
<div class="t" style="left:993.34px;top:195.24px;font-size:14.54px;line-height:14.54px;color:#d4d4d4;">0,5</div>
<div class="t" style="left:1540.92px;top:620.89px;font-size:14.54px;line-height:14.54px;color:#d4d4d4;">0,5</div>
<div class="t" style="left:985.28px;top:154.37px;font-size:14.54px;line-height:14.54px;color:#d4d4d4;">0,55</div>
<div class="t" style="left:1589.99px;top:620.89px;font-size:14.54px;line-height:14.54px;color:#d4d4d4;">0,55</div>
<div class="t" style="left:1404.80px;top:583.59px;font-size:20.20px;line-height:20.20px;color:#f2f2f2;transform:scaleX(0.9720);transform-origin:0 0;">Gamut Coverage:&nbsp; 74,6%</div>
<script>
(function(){
var L=[1291.0,595.6,1288.4,593.6,1285.8,591.6,1283.2,589.6,1280.7,587.6,1278.1,585.6,1275.6,583.6,1273.1,581.6,1270.6,579.6,1268.2,577.6,1265.7,575.6,1263.3,573.6,1260.9,571.6,1258.5,569.6,1256.1,567.6,1253.8,565.6,1251.4,563.6,1249.1,561.6,1246.8,559.6,1244.5,557.6,1242.2,555.6,1240.0,553.6,1237.7,551.6,1235.5,549.6,1233.3,547.6,1231.1,545.6,1229.0,543.6,1226.8,541.6,1224.7,539.6,1222.6,537.6,1220.5,535.6,1218.4,533.6,1216.3,531.6,1214.3,529.6,1212.3,527.6,1210.3,525.6,1208.3,523.6,1206.3,521.6,1204.3,519.6,1202.4,517.6,1200.5,515.6,1198.6,513.6,1196.7,511.6,1194.8,509.6,1192.9,507.6,1191.1,505.6,1189.3,503.6,1187.5,501.6,1185.7,499.6,1183.9,497.6,1182.2,495.6,1180.4,493.6,1178.7,491.6,1177.0,489.6,1175.3,487.6,1173.6,485.6,1171.9,483.6,1170.3,481.6,1168.6,479.6,1167.0,477.6,1165.4,475.6,1163.8,473.6,1162.2,471.6,1160.7,469.6,1159.1,467.6,1157.6,465.6,1156.1,463.6,1154.6,461.6,1153.1,459.6,1151.6,457.6,1150.1,455.6,1148.7,453.6,1147.2,451.6,1145.8,449.6,1144.4,447.6,1143.0,445.6,1141.6,443.6,1140.2,441.6,1138.8,439.6,1137.5,437.6,1136.1,435.6,1134.8,433.6,1133.5,431.6,1132.1,429.6,1130.8,427.6,1129.6,425.6,1128.3,423.6,1127.0,421.6,1125.7,419.6,1124.5,417.6,1123.2,415.6,1122.0,413.6,1120.8,411.6,1119.6,409.6,1118.4,407.6,1117.2,405.6,1116.0,403.6,1114.8,401.6,1113.6,399.6,1112.5,397.6,1111.3,395.6,1110.2,393.6,1109.0,391.6,1107.9,389.6,1106.8,387.6,1105.7,385.6,1104.5,383.6,1103.4,381.6,1102.3,379.6,1101.3,377.6,1100.2,375.6,1099.1,373.6,1098.0,371.6,1097.0,369.6,1095.9,367.6,1094.9,365.6,1093.8,363.6,1092.8,361.6,1091.7,359.6,1090.7,357.6,1089.7,355.6,1088.7,353.6,1087.7,351.6,1086.7,349.6,1085.7,347.6,1084.7,345.6,1083.7,343.6,1082.7,341.6,1081.7,339.6,1080.7,337.6,1079.7,335.6,1078.8,333.6,1077.8,331.6,1076.9,329.6,1075.9,327.6,1074.9,325.6,1074.0,323.6,1073.1,321.6,1072.1,319.6,1071.2,317.6,1070.3,315.6,1069.3,313.6,1068.4,311.6,1067.5,309.6,1066.6,307.6,1065.7,305.6,1064.8,303.6,1063.9,301.6,1063.0,299.6,1062.1,297.6,1061.2,295.6,1060.3,293.6,1059.4,291.6,1058.6,289.6,1057.7,287.6,1056.8,285.6,1056.0,283.6,1055.1,281.6,1054.3,279.6,1053.4,277.6,1052.6,275.6,1051.8,273.6,1050.9,271.6,1050.1,269.6,1049.3,267.6,1048.5,265.6,1047.7,263.6,1046.9,261.6,1046.1,259.6,1045.3,257.6,1044.6,255.6,1043.8,253.6,1043.0,251.6,1042.3,249.6,1041.5,247.6,1040.8,245.6,1040.1,243.6,1039.4,241.6,1038.6,239.6,1037.9,237.6,1037.3,235.6,1036.6,233.6,1035.9,231.6,1035.2,229.6,1034.6,227.6,1033.9,225.6,1033.3,223.6,1032.7,221.6,1032.1,219.6,1031.5,217.6,1030.9,215.6,1030.4,213.6,1029.8,211.6,1029.3,209.6,1028.7,207.6,1028.2,205.6,1027.7,203.6,1027.3,201.6,1026.8,199.6,1026.4,197.6,1025.9,195.6,1025.5,193.6,1025.1,191.6,1024.8,189.6,1024.4,187.6,1024.1,185.6,1023.8,183.6,1023.5,181.6,1023.2,179.6,1023.0,177.6,1022.7,175.6,1022.5,173.6,1022.4,171.6,1022.2,169.6,1022.1,167.6,1022.0,165.6,1022.0,164.8,1022.0,163.8,1022.0,162.6,1022.0,161.3,1022.1,159.9,1022.3,158.5,1022.5,157.1,1022.9,155.6,1023.2,154.0,1023.6,152.4,1024.1,150.9,1024.6,149.5,1025.1,148.2,1025.7,146.9,1026.4,145.7,1027.1,144.5,1027.8,143.4,1028.6,142.3,1029.5,141.2,1030.3,140.1,1031.3,139.1,1032.3,138.1,1033.4,137.2,1034.6,136.3,1035.9,135.5,1037.2,134.7,1038.6,134.0,1040.1,133.4,1041.7,132.8,1043.5,132.3,1045.4,131.8,1047.5,131.5,1049.7,131.1,1052.0,130.8,1054.4,130.6,1056.8,130.4,1059.4,130.2,1062.1,130.1,1064.9,130.0,1067.7,130.0,1070.5,130.0,1073.2,130.0,1076.0,130.1,1078.9,130.3,1081.8,130.5,1084.4,130.7,1086.7,130.9,1088.3,131.0,1104.1,131.8,1121.2,133.0,1139.7,134.7,1160.0,136.7,1182.6,139.1,1207.5,141.9,1235.2,145.0,1265.5,148.5,1298.6,152.3,1334.3,156.5,1372.1,160.8,1410.9,165.3,1448.5,169.6,1485.1,173.8,1518.3,177.6,1547.6,181.0,1572.5,183.9,1593.4,186.2,1611.0,188.3,1626.3,190.0,1642.4,191.0,1682.0,196.4,1290.6,595.6];
var c=document.getElementById('cie');if(!c||!c.getContext)return;
var W=c.width,H=c.height,ctx=c.getContext('2d');
var SX=1062,SY=817.5,OXo=1020-1019.5,OYo=610.5-118.5;
function px(u,v){return [OXo+u*SX, OYo-v*SY];}
function uv(x,y){var d=-2*x+12*y+3;return [4*x/d,9*y/d];}
var off=document.createElement('canvas');off.width=W;off.height=H;var oc=off.getContext('2d');
var im=oc.createImageData(W,H),d=im.data;
for(var j=0;j<H;j++){for(var i=0;i<W;i++){
 var u=(i+0.5-OXo)/SX, v=(OYo-(j+0.5))/SY; if(v<=0.002)v=0.002; if(u<0)u=0;
 var den=6*u-16*v+12, x=9*u/den, y=4*v/den;
 var X=x/y,Z=(1-x-y)/y;
 var R=3.2406*X-1.5372-0.4986*Z, G=-0.9689*X+1.8758+0.0415*Z, B=0.0557*X-0.2040+1.0570*Z;
 if(R<0)R=0;if(G<0)G=0;if(B<0)B=0;var m=Math.max(R,G,B)||1;
 var k=(j*W+i)*4;d[k]=R/m*255;d[k+1]=G/m*255;d[k+2]=B/m*255;d[k+3]=255;}}
oc.putImageData(im,0,0);
function locus(){ctx.beginPath();for(var n=0;n<L.length;n+=2){var X=L[n]-1019.5,Y=L[n+1]-118.5;if(n==0)ctx.moveTo(X,Y);else ctx.lineTo(X,Y);}ctx.closePath();}
ctx.save();locus();ctx.clip();ctx.drawImage(off,0,0);ctx.fillStyle='rgba(0,0,0,0.4)';ctx.fillRect(0,0,W,H);ctx.restore();
var T=[[0.0757,0.5757],[0.1754,0.1579],[0.4507,0.5229]];
ctx.save();locus();ctx.clip();ctx.beginPath();for(var n=0;n<3;n++){var q=px(T[n][0],T[n][1]);if(n==0)ctx.moveTo(q[0],q[1]);else ctx.lineTo(q[0],q[1]);}ctx.closePath();ctx.clip();ctx.drawImage(off,0,0);ctx.restore();
})();
</script>
<div class="t" style="left:16.00px;top:687.84px;font-size:29.36px;line-height:29.36px;color:#f2f2f2;transform:scaleX(1.0179);transform-origin:0 0;">Current Reading</div>
<div class="t" style="left:16.00px;top:762.75px;font-size:22.50px;line-height:22.50px;color:#f2f2f2;transform:scaleX(1.1073);transform-origin:0 0;">x: 0,3098</div>
<div class="t" style="left:172.70px;top:762.75px;font-size:22.50px;line-height:22.50px;color:#f2f2f2;transform:scaleX(1.1030);transform-origin:0 0;">y: 0,332</div>
<div class="t" style="left:16.00px;top:804.05px;font-size:22.50px;line-height:22.50px;color:#f2f2f2;transform:scaleX(1.1020);transform-origin:0 0;">fL: 181,3</div>
<div class="t" style="left:16.00px;top:844.15px;font-size:22.50px;line-height:22.50px;color:#f2f2f2;transform:scaleX(1.1594);transform-origin:0 0;">cd/m&sup2;: 621,17</div>
<div class="t" style="left:427.50px;top:668.64px;font-size:14.24px;line-height:14.24px;color:#cfcfcf;transform:scaleX(0.9548);transform-origin:0 0;">RGB Balance</div>
<svg width="1670" height="1005" style="left:0;top:0"><rect x="358.5" y="684.7" width="249.6" height="179.9" fill="#242424"/><line x1="358.5" y1="703.4" x2="608.1" y2="703.4" stroke="#7c7c7c" stroke-width="1.5"/><line x1="352.5" y1="703.4" x2="358.5" y2="703.4" stroke="#e0e0e0" stroke-width="1.8"/><line x1="358.5" y1="740.3" x2="608.1" y2="740.3" stroke="#7c7c7c" stroke-width="1.5"/><line x1="352.5" y1="740.3" x2="358.5" y2="740.3" stroke="#e0e0e0" stroke-width="1.8"/><line x1="358.5" y1="776.1" x2="608.1" y2="776.1" stroke="#7c7c7c" stroke-width="1.5"/><line x1="352.5" y1="776.1" x2="358.5" y2="776.1" stroke="#e0e0e0" stroke-width="1.8"/><line x1="358.5" y1="812.2" x2="608.1" y2="812.2" stroke="#7c7c7c" stroke-width="1.5"/><line x1="352.5" y1="812.2" x2="358.5" y2="812.2" stroke="#e0e0e0" stroke-width="1.8"/><line x1="358.5" y1="848.3" x2="608.1" y2="848.3" stroke="#7c7c7c" stroke-width="1.5"/><line x1="352.5" y1="848.3" x2="358.5" y2="848.3" stroke="#e0e0e0" stroke-width="1.8"/><rect x="358.5" y="684.7" width="249.6" height="179.9" fill="none" stroke="#8c8c8c" stroke-width="1.5"/><line x1="358.5" y1="864.6" x2="358.5" y2="871.6" stroke="#dcdcdc" stroke-width="1.5"/><line x1="608.1" y1="864.6" x2="608.1" y2="871.6" stroke="#dcdcdc" stroke-width="1.5"/><defs><linearGradient id="rb" x1="0" x2="0" y1="0" y2="1"><stop offset="0" stop-color="#ff5656"/><stop offset="1" stop-color="#ff4040"/></linearGradient><linearGradient id="gb" x1="0" x2="0" y1="0" y2="1"><stop offset="0" stop-color="#58ae58"/><stop offset="1" stop-color="#3c9a3c"/></linearGradient><linearGradient id="bb" x1="0" x2="0" y1="0" y2="1"><stop offset="0" stop-color="#5c5cff"/><stop offset="1" stop-color="#4040ff"/></linearGradient></defs><rect x="383.5" y="798.8" width="65" height="65.5" fill="url(#rb)" stroke="#000" stroke-width="2"/><rect x="448.5" y="763.5" width="66" height="100.8" fill="url(#gb)" stroke="#000" stroke-width="2"/><rect x="514.5" y="781.7" width="67" height="82.6" fill="url(#bb)" stroke="#000" stroke-width="2"/></svg>
<div class="t" style="left:328.20px;top:697.62px;font-size:14.39px;line-height:14.39px;color:#d4d4d4;transform:scaleX(0.9913);transform-origin:0 0;">104</div>
<div class="t" style="left:328.20px;top:734.52px;font-size:14.39px;line-height:14.39px;color:#d4d4d4;transform:scaleX(0.9913);transform-origin:0 0;">102</div>
<div class="t" style="left:328.20px;top:770.32px;font-size:14.39px;line-height:14.39px;color:#d4d4d4;transform:scaleX(0.9913);transform-origin:0 0;">100</div>
<div class="t" style="left:336.13px;top:806.42px;font-size:14.39px;line-height:14.39px;color:#d4d4d4;transform:scaleX(0.9913);transform-origin:0 0;">98</div>
<div class="t" style="left:336.13px;top:842.52px;font-size:14.39px;line-height:14.39px;color:#d4d4d4;transform:scaleX(0.9913);transform-origin:0 0;">96</div>
<div class="t" style="left:463.50px;top:871.30px;font-size:13.23px;line-height:13.23px;color:#d4d4d4;transform:scaleX(1.1142);transform-origin:0 0;">100W</div>
<div class="t" style="left:771.00px;top:660.11px;font-size:13.81px;line-height:13.81px;color:#cfcfcf;">CIE 1931 xy</div>
<div class="a" style="left:638.4px;top:676.3px;width:341.5px;height:198.2px;background:#8a8a8a"></div>
<canvas id="xy" class="a" width="338" height="195" style="left:640px;top:678px;width:338px;height:195px;background:radial-gradient(ellipse at 50% 50%,#fff 0,rgba(255,255,255,0) 45%),radial-gradient(ellipse at 0 0,#80ffc8,rgba(128,255,200,0) 60%),radial-gradient(ellipse at 100% 0,#ffd8a0,rgba(255,216,160,0) 55%),radial-gradient(ellipse at 100% 100%,#ff8cc0,rgba(255,140,192,0) 60%),radial-gradient(ellipse at 0 100%,#a8c8ff,rgba(168,200,255,0) 55%),radial-gradient(ellipse at 0 50%,#90ffff,rgba(144,255,255,0) 50%),radial-gradient(ellipse at 50% 0,#e0ffd0,rgba(224,255,208,0) 50%),radial-gradient(ellipse at 55% 100%,#ffc8ff,rgba(255,200,255,0) 50%),#fff"></canvas>
<script>
(function(){
var c=document.getElementById('xy');if(!c||!c.getContext)return;
var W=c.width,H=c.height,ctx=c.getContext('2d'),im=ctx.createImageData(W,H),d=im.data;
function g(v){v=v<0?0:v>1?1:v;return v<=0.0031308?12.92*v:1.055*Math.pow(v,1/2.4)-0.055;}
var KX=0.052,KY=0.055;
for(var j=0;j<H;j++)for(var i=0;i<W;i++){
 var x=0.3127+((i+0.5)/W-0.5)*2*KX, y=0.3290-((j+0.5)/H-0.5)*2*KY;
 var X=x/y,Z=(1-x-y)/y;
 var R=3.2406*X-1.5372-0.4986*Z, G=-0.9689*X+1.8758+0.0415*Z, B=0.0557*X-0.2040+1.0570*Z;
 if(R<0)R=0;if(G<0)G=0;if(B<0)B=0;var m=Math.max(R,G,B)||1;
 var k=(j*W+i)*4;d[k]=g(R/m)*255;d[k+1]=g(G/m)*255;d[k+2]=g(B/m)*255;d[k+3]=255;}
ctx.putImageData(im,0,0);
})();
</script>
<svg width="1670" height="1005" style="left:0;top:0"><circle cx="792.4" cy="758" r="4.2" fill="#b4b4b4" stroke="#111" stroke-width="1.2"/><circle cx="788.4" cy="761.5" r="4.2" fill="#fff" stroke="#111" stroke-width="1.2"/><rect x="801.8" y="767.3" width="13.8" height="13.8" fill="#fff" stroke="#000" stroke-width="2"/></svg>
<div class="a" style="left:996px;top:660px;width:653px;height:225px;background:#000"></div>
<div class="a" style="left:997.5px;top:661.5px;width:650.5px;height:223px;background:#2e2e2e;overflow:hidden" id="tbl"></div>
<div class="a" style="left:997.5px;top:661.5px;width:633.5px;height:16.5px;background:#303030"></div>
<div class="a" style="left:997.5px;top:678px;width:633.5px;height:16.7px;background:#141414"></div>
<div class="a" style="left:997.5px;top:694.7px;width:633.5px;height:170.1px;overflow:hidden">
<div class="a" style="left:0;top:0.0px;width:633.5px;height:30.8px;background:linear-gradient(#4a4a4a,#3e3e3e)"></div>
<div class="a" style="left:0;top:30.8px;width:633.5px;height:31.2px;background:linear-gradient(#858585,#7c7c7c)"></div>
<div class="a" style="left:0;top:62.0px;width:633.5px;height:31.1px;background:linear-gradient(#4a4a4a,#3e3e3e)"></div>
<div class="a" style="left:0;top:93.1px;width:633.5px;height:31.0px;background:linear-gradient(#858585,#7c7c7c)"></div>
<div class="a" style="left:0;top:124.1px;width:633.5px;height:30.8px;background:linear-gradient(#4a4a4a,#3e3e3e)"></div>
<div class="a" style="left:0;top:154.9px;width:633.5px;height:30.8px;background:linear-gradient(#858585,#7c7c7c)"></div>
<div class="t" style="left:13.30px;top:7.06px;font-size:19.77px;line-height:19.77px;color:#f4f4f4;font-weight:bold;transform:scaleX(0.8012);transform-origin:0 0;">x: CIE31</div>
<div class="t" style="left:97.50px;top:8.17px;font-size:18.46px;line-height:18.46px;color:#f0f0f0;transform:scaleX(0.8880);transform-origin:0 0;">0,3103</div>
<div class="t" style="left:175.20px;top:8.17px;font-size:18.46px;line-height:18.46px;color:#f0f0f0;transform:scaleX(0.8880);transform-origin:0 0;">0,6449</div>
<div class="t" style="left:243.20px;top:8.17px;font-size:18.46px;line-height:18.46px;color:#f0f0f0;transform:scaleX(0.8880);transform-origin:0 0;">0,3010</div>
<div class="t" style="left:320.80px;top:8.17px;font-size:18.46px;line-height:18.46px;color:#f0f0f0;transform:scaleX(0.8880);transform-origin:0 0;">0,1508</div>
<div class="t" style="left:389.80px;top:8.17px;font-size:18.46px;line-height:18.46px;color:#f0f0f0;transform:scaleX(0.8880);transform-origin:0 0;">0,2257</div>
<div class="t" style="left:467.40px;top:8.17px;font-size:18.46px;line-height:18.46px;color:#f0f0f0;transform:scaleX(0.8880);transform-origin:0 0;">0,3165</div>
<div class="t" style="left:545.00px;top:8.17px;font-size:18.46px;line-height:18.46px;color:#f0f0f0;transform:scaleX(0.8880);transform-origin:0 0;">0,4153</div>
<div class="t" style="left:622.80px;top:8.17px;font-size:18.46px;line-height:18.46px;color:#f0f0f0;transform:scaleX(0.8880);transform-origin:0 0;">0,3098</div>
<div class="t" style="left:13.30px;top:37.86px;font-size:19.77px;line-height:19.77px;color:#f4f4f4;font-weight:bold;transform:scaleX(0.8012);transform-origin:0 0;">y: CIE31</div>
<div class="t" style="left:97.50px;top:38.97px;font-size:18.46px;line-height:18.46px;color:#f0f0f0;transform:scaleX(0.8880);transform-origin:0 0;">0,3331</div>
<div class="t" style="left:175.20px;top:38.97px;font-size:18.46px;line-height:18.46px;color:#f0f0f0;transform:scaleX(0.8880);transform-origin:0 0;">0,3305</div>
<div class="t" style="left:243.20px;top:38.97px;font-size:18.46px;line-height:18.46px;color:#f0f0f0;transform:scaleX(0.8880);transform-origin:0 0;">0,6030</div>
<div class="t" style="left:320.80px;top:38.97px;font-size:18.46px;line-height:18.46px;color:#f0f0f0;transform:scaleX(0.8880);transform-origin:0 0;">0,0626</div>
<div class="t" style="left:389.80px;top:38.97px;font-size:18.46px;line-height:18.46px;color:#f0f0f0;transform:scaleX(0.8880);transform-origin:0 0;">0,3338</div>
<div class="t" style="left:467.40px;top:38.97px;font-size:18.46px;line-height:18.46px;color:#f0f0f0;transform:scaleX(0.8880);transform-origin:0 0;">0,1522</div>
<div class="t" style="left:545.00px;top:38.97px;font-size:18.46px;line-height:18.46px;color:#f0f0f0;transform:scaleX(0.8880);transform-origin:0 0;">0,5096</div>
<div class="t" style="left:622.80px;top:38.97px;font-size:18.46px;line-height:18.46px;color:#f0f0f0;transform:scaleX(0.8880);transform-origin:0 0;">0,3320</div>
<div class="t" style="left:13.30px;top:69.06px;font-size:19.77px;line-height:19.77px;color:#f4f4f4;font-weight:bold;transform:scaleX(0.7205);transform-origin:0 0;">Y</div>
<div class="t" style="left:97.50px;top:70.17px;font-size:18.46px;line-height:18.46px;color:#f0f0f0;transform:scaleX(0.8880);transform-origin:0 0;">329,2648</div>
<div class="t" style="left:175.20px;top:70.17px;font-size:18.46px;line-height:18.46px;color:#f0f0f0;transform:scaleX(0.8880);transform-origin:0 0;">65,1995</div>
<div class="t" style="left:243.20px;top:70.17px;font-size:18.46px;line-height:18.46px;color:#f0f0f0;transform:scaleX(0.8880);transform-origin:0 0;">234,8803</div>
<div class="t" style="left:320.80px;top:70.17px;font-size:18.46px;line-height:18.46px;color:#f0f0f0;transform:scaleX(0.8880);transform-origin:0 0;">24,3649</div>
<div class="t" style="left:389.80px;top:70.17px;font-size:18.46px;line-height:18.46px;color:#f0f0f0;transform:scaleX(0.8880);transform-origin:0 0;">261,2263</div>
<div class="t" style="left:467.40px;top:70.17px;font-size:18.46px;line-height:18.46px;color:#f0f0f0;transform:scaleX(0.8880);transform-origin:0 0;">89,8160</div>
<div class="t" style="left:545.00px;top:70.17px;font-size:18.46px;line-height:18.46px;color:#f0f0f0;transform:scaleX(0.8880);transform-origin:0 0;">301,5093</div>
<div class="t" style="left:622.80px;top:70.17px;font-size:18.46px;line-height:18.46px;color:#f0f0f0;transform:scaleX(0.8880);transform-origin:0 0;">621,1700</div>
<div class="t" style="left:13.30px;top:100.16px;font-size:19.77px;line-height:19.77px;color:#f4f4f4;font-weight:bold;transform:scaleX(0.8294);transform-origin:0 0;">Target Y</div>
<div class="t" style="left:97.50px;top:101.27px;font-size:18.46px;line-height:18.46px;color:#f0f0f0;transform:scaleX(0.8880);transform-origin:0 0;">328,9987</div>
<div class="t" style="left:175.20px;top:101.27px;font-size:18.46px;line-height:18.46px;color:#f0f0f0;transform:scaleX(0.8880);transform-origin:0 0;">97,8313</div>
<div class="t" style="left:243.20px;top:101.27px;font-size:18.46px;line-height:18.46px;color:#f0f0f0;transform:scaleX(0.8880);transform-origin:0 0;">206,3989</div>
<div class="t" style="left:320.80px;top:101.27px;font-size:18.46px;line-height:18.46px;color:#f0f0f0;transform:scaleX(0.8880);transform-origin:0 0;">24,7686</div>
<div class="t" style="left:389.80px;top:101.27px;font-size:18.46px;line-height:18.46px;color:#f0f0f0;transform:scaleX(0.8880);transform-origin:0 0;">231,1674</div>
<div class="t" style="left:467.40px;top:101.27px;font-size:18.46px;line-height:18.46px;color:#f0f0f0;transform:scaleX(0.8880);transform-origin:0 0;">122,5999</div>
<div class="t" style="left:545.00px;top:101.27px;font-size:18.46px;line-height:18.46px;color:#f0f0f0;transform:scaleX(0.8880);transform-origin:0 0;">304,2302</div>
<div class="t" style="left:622.80px;top:101.27px;font-size:18.46px;line-height:18.46px;color:#f0f0f0;transform:scaleX(0.8880);transform-origin:0 0;">621,0000</div>
<div class="t" style="left:13.30px;top:131.16px;font-size:19.77px;line-height:19.77px;color:#f4f4f4;font-weight:bold;transform:scaleX(0.8509);transform-origin:0 0;">&Delta;E 2000</div>
<div class="t" style="left:97.50px;top:132.27px;font-size:18.46px;line-height:18.46px;color:#f0f0f0;transform:scaleX(0.8880);transform-origin:0 0;">3,7907</div>
<div class="t" style="left:175.20px;top:132.27px;font-size:18.46px;line-height:18.46px;color:#f0f0f0;transform:scaleX(0.8880);transform-origin:0 0;">7,5518</div>
<div class="t" style="left:243.20px;top:132.27px;font-size:18.46px;line-height:18.46px;color:#f0f0f0;transform:scaleX(0.8880);transform-origin:0 0;">9,1434</div>
<div class="t" style="left:320.80px;top:132.27px;font-size:18.46px;line-height:18.46px;color:#f0f0f0;transform:scaleX(0.8880);transform-origin:0 0;">0,7910</div>
<div class="t" style="left:389.80px;top:132.27px;font-size:18.46px;line-height:18.46px;color:#f0f0f0;transform:scaleX(0.8880);transform-origin:0 0;">7,5729</div>
<div class="t" style="left:467.40px;top:132.27px;font-size:18.46px;line-height:18.46px;color:#f0f0f0;transform:scaleX(0.8880);transform-origin:0 0;">7,5644</div>
<div class="t" style="left:545.00px;top:132.27px;font-size:18.46px;line-height:18.46px;color:#f0f0f0;transform:scaleX(0.8880);transform-origin:0 0;">2,4216</div>
<div class="t" style="left:622.80px;top:132.27px;font-size:18.46px;line-height:18.46px;color:#f0f0f0;transform:scaleX(0.8880);transform-origin:0 0;">4,2010</div>
<div class="t" style="left:13.30px;top:161.96px;font-size:19.77px;line-height:19.77px;color:#f4f4f4;font-weight:bold;transform:scaleX(0.8171);transform-origin:0 0;">&Delta;E ITP</div>
<div class="t" style="left:97.50px;top:163.07px;font-size:18.46px;line-height:18.46px;color:#f0f0f0;transform:scaleX(0.8880);transform-origin:0 0;">3,1220</div>
<div class="t" style="left:175.20px;top:163.07px;font-size:18.46px;line-height:18.46px;color:#f0f0f0;transform:scaleX(0.8880);transform-origin:0 0;">29,0006</div>
<div class="t" style="left:243.20px;top:163.07px;font-size:18.46px;line-height:18.46px;color:#f0f0f0;transform:scaleX(0.8880);transform-origin:0 0;">43,8800</div>
<div class="t" style="left:320.80px;top:163.07px;font-size:18.46px;line-height:18.46px;color:#f0f0f0;transform:scaleX(0.8880);transform-origin:0 0;">3,7680</div>
<div class="t" style="left:389.80px;top:163.07px;font-size:18.46px;line-height:18.46px;color:#f0f0f0;transform:scaleX(0.8880);transform-origin:0 0;">37,2707</div>
<div class="t" style="left:467.40px;top:163.07px;font-size:18.46px;line-height:18.46px;color:#f0f0f0;transform:scaleX(0.8880);transform-origin:0 0;">33,9114</div>
<div class="t" style="left:545.00px;top:163.07px;font-size:18.46px;line-height:18.46px;color:#f0f0f0;transform:scaleX(0.8880);transform-origin:0 0;">11,3620</div>
<div class="t" style="left:622.80px;top:163.07px;font-size:18.46px;line-height:18.46px;color:#f0f0f0;transform:scaleX(0.8880);transform-origin:0 0;">3,1000</div>
</div>
<div class="t" style="left:1108.55px;top:670.76px;font-size:17.30px;line-height:17.30px;color:#f0f0f0;transform:scaleX(0.9340);transform-origin:0 0;">White</div>
<div class="t" style="left:1187.18px;top:670.76px;font-size:17.30px;line-height:17.30px;color:#f0f0f0;transform:scaleX(0.9340);transform-origin:0 0;">Red</div>
<div class="t" style="left:1252.45px;top:670.76px;font-size:17.30px;line-height:17.30px;color:#f0f0f0;transform:scaleX(0.9340);transform-origin:0 0;">Green</div>
<div class="t" style="left:1332.43px;top:670.76px;font-size:17.30px;line-height:17.30px;color:#f0f0f0;transform:scaleX(0.9340);transform-origin:0 0;">Blue</div>
<div class="t" style="left:1402.64px;top:670.76px;font-size:17.30px;line-height:17.30px;color:#f0f0f0;transform:scaleX(0.9340);transform-origin:0 0;">Cyan</div>
<div class="t" style="left:1467.57px;top:670.76px;font-size:17.30px;line-height:17.30px;color:#f0f0f0;transform:scaleX(0.9340);transform-origin:0 0;">Magenta</div>
<div class="t" style="left:1552.80px;top:670.76px;font-size:17.30px;line-height:17.30px;color:#f0f0f0;transform:scaleX(0.9340);transform-origin:0 0;">Yellow</div>
<div class="a" style="left:1631.4px;top:694.8px;width:16.6px;height:169.5px;background:#5c5c5c"></div>
<div class="a" style="left:1633px;top:697px;width:13.5px;height:17px;border-radius:3px;background:#7a7a7a"></div>
<svg class="a" style="left:1633px;top:697px" width="14" height="17"><path d="M2.5 11.5L7 6.5L11.5 11.5Z" fill="#3a3a3a"/></svg>
<div class="a" style="left:1633.5px;top:716.4px;width:12.5px;height:105px;border-radius:6px;background:#474747"></div>
<div class="a" style="left:1633px;top:847px;width:13.5px;height:16px;border-radius:3px;background:#7a7a7a"></div>
<svg class="a" style="left:1633px;top:847px" width="14" height="16"><path d="M2.5 5L7 10L11.5 5Z" fill="#3a3a3a"/></svg>
<div class="a" style="left:997.5px;top:864.8px;width:633.9px;height:20px;background:#5c5c5c"></div>
<div class="a" style="left:999.1px;top:867px;width:13.8px;height:16px;border-radius:3px;background:#7a7a7a"></div>
<svg class="a" style="left:999.1px;top:867px" width="14" height="16"><path d="M3.5 8L9 3V13Z" fill="#3a3a3a"/></svg>
<div class="a" style="left:1016.7px;top:867px;width:540px;height:16px;border-radius:8px;background:#474747"></div>
<div class="a" style="left:1615.5px;top:867px;width:14px;height:16px;border-radius:3px;background:#7a7a7a"></div>
<svg class="a" style="left:1615.5px;top:867px" width="14" height="16"><path d="M10.5 8L5 3V13Z" fill="#3a3a3a"/></svg>
<div class="a" style="left:1631.4px;top:864.3px;width:16.6px;height:20.5px;background:#2e2e2e"></div>
<div class="a" style="left:2.2px;top:929px;width:155.5px;height:80px;border-radius:6px;background:linear-gradient(#adadad 0,#999 18%,#8e8e8e 45%,#7e7e7e 62%,#6a6a6a 80%,#606060 100%);box-shadow:inset 0 1px 0 #bdbdbd"></div>
<div class="a" style="left:8.7px;top:934.8px;width:142.8px;height:45.2px;border-radius:4px;background:#c0c0c0;box-shadow:inset 1px 2px 1px rgba(0,0,0,0.28)"></div>
<div class="t" style="left:62.26px;top:988.48px;font-size:13.37px;line-height:13.37px;color:#2e2e2e;font-weight:bold;transform:scaleX(0.9750);transform-origin:0 0;">White</div>
<div class="a" style="left:160.1px;top:929px;width:155.5px;height:80px;border-radius:6px;background:linear-gradient(#adadad 0,#999 18%,#8e8e8e 45%,#7e7e7e 62%,#6a6a6a 80%,#606060 100%);box-shadow:inset 0 1px 0 #bdbdbd"></div>
<div class="a" style="left:166.6px;top:934.8px;width:142.8px;height:45.2px;border-radius:4px;background:#bb0000;box-shadow:inset 1px 2px 1px rgba(0,0,0,0.28)"></div>
<div class="t" style="left:225.58px;top:988.48px;font-size:13.37px;line-height:13.37px;color:#2e2e2e;font-weight:bold;transform:scaleX(0.9750);transform-origin:0 0;">Red</div>
<div class="a" style="left:318.2px;top:929px;width:155.5px;height:80px;border-radius:6px;background:linear-gradient(#adadad 0,#999 18%,#8e8e8e 45%,#7e7e7e 62%,#6a6a6a 80%,#606060 100%);box-shadow:inset 0 1px 0 #bdbdbd"></div>
<div class="a" style="left:324.7px;top:934.8px;width:142.8px;height:45.2px;border-radius:4px;background:#00bb00;box-shadow:inset 1px 2px 1px rgba(0,0,0,0.28)"></div>
<div class="t" style="left:377.16px;top:988.48px;font-size:13.37px;line-height:13.37px;color:#2e2e2e;font-weight:bold;transform:scaleX(0.9750);transform-origin:0 0;">Green</div>
<div class="a" style="left:475.9px;top:929px;width:155.5px;height:80px;border-radius:6px;background:linear-gradient(#adadad 0,#999 18%,#8e8e8e 45%,#7e7e7e 62%,#6a6a6a 80%,#606060 100%);box-shadow:inset 0 1px 0 #bdbdbd"></div>
<div class="a" style="left:482.4px;top:934.8px;width:142.8px;height:45.2px;border-radius:4px;background:#0000bb;box-shadow:inset 1px 2px 1px rgba(0,0,0,0.28)"></div>
<div class="t" style="left:539.57px;top:988.48px;font-size:13.37px;line-height:13.37px;color:#2e2e2e;font-weight:bold;transform:scaleX(0.9750);transform-origin:0 0;">Blue</div>
<div class="a" style="left:634.0px;top:929px;width:155.5px;height:80px;border-radius:6px;background:linear-gradient(#adadad 0,#999 18%,#8e8e8e 45%,#7e7e7e 62%,#6a6a6a 80%,#606060 100%);box-shadow:inset 0 1px 0 #bdbdbd"></div>
<div class="a" style="left:640.5px;top:934.8px;width:142.8px;height:45.2px;border-radius:4px;background:#00bbbb;box-shadow:inset 1px 2px 1px rgba(0,0,0,0.28)"></div>
<div class="t" style="left:695.86px;top:988.48px;font-size:13.37px;line-height:13.37px;color:#2e2e2e;font-weight:bold;transform:scaleX(0.9750);transform-origin:0 0;">Cyan</div>
<div class="a" style="left:792.0px;top:929px;width:155.5px;height:80px;border-radius:6px;background:linear-gradient(#adadad 0,#999 18%,#8e8e8e 45%,#7e7e7e 62%,#6a6a6a 80%,#606060 100%);box-shadow:inset 0 1px 0 #bdbdbd"></div>
<div class="a" style="left:798.5px;top:934.8px;width:142.8px;height:45.2px;border-radius:4px;background:#bb00bb;box-shadow:inset 1px 2px 1px rgba(0,0,0,0.28)"></div>
<div class="t" style="left:843.36px;top:988.48px;font-size:13.37px;line-height:13.37px;color:#2e2e2e;font-weight:bold;transform:scaleX(0.9750);transform-origin:0 0;">Magenta</div>
<div class="a" style="left:950.1px;top:929px;width:155.5px;height:80px;border-radius:6px;background:linear-gradient(#adadad 0,#999 18%,#8e8e8e 45%,#7e7e7e 62%,#6a6a6a 80%,#606060 100%);box-shadow:inset 0 1px 0 #bdbdbd"></div>
<div class="a" style="left:956.6px;top:934.8px;width:142.8px;height:45.2px;border-radius:4px;background:#c2c200;box-shadow:inset 1px 2px 1px rgba(0,0,0,0.28)"></div>
<div class="t" style="left:1007.25px;top:988.48px;font-size:13.37px;line-height:13.37px;color:#2e2e2e;font-weight:bold;transform:scaleX(0.9750);transform-origin:0 0;">Yellow</div>
<div class="a" style="left:1108.1px;top:929px;width:155.4px;height:80px;border-radius:6px;background:linear-gradient(#1e1e1e 0,#262626 30%,#2e2e2e 60%,#333 100%)"></div>
<div class="a" style="left:1114.7px;top:934.4px;width:142.6px;height:45.4px;border-radius:5px;background:#fff;box-shadow:inset 1px 2px 1px rgba(0,0,0,0.3)"></div>
<div class="t" style="left:1168.10px;top:989.12px;font-size:12.50px;line-height:12.50px;color:#fafafa;font-weight:bold;transform:scaleX(1.0871);transform-origin:0 0;">100W</div>
<div class="a" style="left:1267.2px;top:928.4px;width:59.6px;height:23px;border-radius:5px 5px 0 0;background:linear-gradient(#acacac,#8e8e8e)"></div>
<div class="a" style="left:1267.2px;top:951.4px;width:59.6px;height:60px;background:linear-gradient(#8e8e8e,#6a6a6a);border-top:1.5px solid #2e2e2e"></div>
<div class="a" style="left:1287px;top:931px;width:20px;height:20px;border-radius:50%;background:linear-gradient(#7c7c7c,#a6a6a6)"></div>
<svg class="a" style="left:1287px;top:931px" width="20" height="20"><path d="M4.5 11.5L10 5.5L15.5 11.5Z" fill="#2e2e2e"/></svg>
<div class="a" style="left:1277.4px;top:958.9px;width:38.9px;height:38.3px;border-radius:6px;border:2.6px solid #222;background:linear-gradient(#a2a2a2 50%,#8a8a8a 50%)"></div>
<div class="a" style="left:1288.7px;top:970px;width:17.4px;height:17px;background:linear-gradient(#1a1a1a 50%,#000 50%)"></div>
<div class="a" style="left:1328.3px;top:927.8px;width:282.9px;height:38px;background:linear-gradient(#b3b3b3,#9a9a9a 40%,#828282 70%,#6c6c6c);border-radius:4px 0 0 0"></div>
<div class="a" style="left:1385.6px;top:927.8px;width:2px;height:38px;background:#2a2a2a"></div>
<div class="a" style="left:1441.4px;top:927.8px;width:2px;height:38px;background:#2a2a2a"></div>
<div class="a" style="left:1497.9px;top:927.8px;width:2px;height:38px;background:#2a2a2a"></div>
<div class="a" style="left:1554.3px;top:927.8px;width:2px;height:38px;background:#2a2a2a"></div>
<div class="a" style="left:1328.3px;top:965.8px;width:338.7px;height:1.6px;background:#2a2a2a"></div>
<div class="a" style="left:1345.0px;top:934.9px;width:24.4px;height:24.4px;border-radius:50%;background:linear-gradient(#767676,#a6a6a6)"></div>
<div class="a" style="left:1402.6px;top:934.9px;width:24.4px;height:24.4px;border-radius:50%;background:linear-gradient(#767676,#a6a6a6)"></div>
<div class="a" style="left:1458.8px;top:934.9px;width:24.4px;height:24.4px;border-radius:50%;background:linear-gradient(#767676,#a6a6a6)"></div>
<div class="a" style="left:1515.3px;top:934.9px;width:24.4px;height:24.4px;border-radius:50%;background:linear-gradient(#767676,#a6a6a6)"></div>
<div class="a" style="left:1571.3px;top:934.9px;width:24.4px;height:24.4px;border-radius:50%;background:linear-gradient(#767676,#a6a6a6)"></div>
<div class="a" style="left:1352.5px;top:942.4px;width:9.7px;height:9.5px;background:#2a2a2a"></div>
<svg class="a" style="left:1400px;top:930px" width="40" height="40"><path d="M11.1 12.2L21.6 18.2L11.1 24.3Z" fill="#2a2a2a"/></svg>
<svg class="a" style="left:1451px;top:927px" width="40" height="40"><path d="M15.5 15.3H13.3V27H15.5" fill="none" stroke="#2a2a2a" stroke-width="2.4"/><path d="M24.5 15.3H26.7V27H24.5" fill="none" stroke="#2a2a2a" stroke-width="2.4"/><circle cx="18" cy="20.5" r="1.1" fill="#2a2a2a"/><circle cx="22" cy="20.5" r="1.1" fill="#2a2a2a"/></svg>
<svg class="a" style="left:1507.5px;top:927px" width="40" height="40"><path d="M20 20C17.5 17 15.5 16.3 14 16.3C12 16.3 11 17.8 11 19.8C11 21.8 12 23.3 14 23.3C15.5 23.3 17.5 22.6 20 20C22.5 17 24.5 16.3 26 16.3C28 16.3 29 17.8 29 19.8C29 21.8 28 23.3 26 23.3C24.5 23.3 22.5 22.6 20 20Z" fill="none" stroke="#2a2a2a" stroke-width="2.2"/></svg>
<svg class="a" style="left:1563.5px;top:927px" width="40" height="40"><path d="M14.8 18.5A5.8 5.8 0 0 1 24.5 15.8" fill="none" stroke="#2a2a2a" stroke-width="2.8"/><path d="M26.8 13L27 19.5L21 18.3Z" fill="#2a2a2a"/><path d="M25.2 21.5A5.8 5.8 0 0 1 15.5 24.2" fill="none" stroke="#2a2a2a" stroke-width="2.8"/><path d="M13.2 27L13 20.5L19 21.7Z" fill="#2a2a2a"/></svg>
<div class="a" style="left:1328.3px;top:967.4px;width:169.6px;height:40px;background:linear-gradient(#b3b3b3,#9a9a9a 40%,#828282 70%,#6c6c6c);border-radius:4px 0 0 0"></div>
<div class="a" style="left:1499.8px;top:967.4px;width:167.2px;height:40px;background:linear-gradient(#b3b3b3,#9a9a9a 40%,#828282 70%,#6c6c6c);border-radius:0 4px 0 0"></div>
<div class="a" style="left:1497.9px;top:967.4px;width:1.9px;height:40px;background:#2a2a2a"></div>
<div class="a" style="left:1355.1px;top:973.5px;width:24.4px;height:24.4px;border-radius:50%;background:linear-gradient(#7a7a7a,#a8a8a8)"></div>
<div class="a" style="left:1621.4px;top:973.5px;width:24.4px;height:24.4px;border-radius:50%;background:linear-gradient(#7a7a7a,#a8a8a8)"></div>
<svg class="a" style="left:1352.3px;top:970.7px" width="30" height="30"><path d="M16.5 9L11.5 15L16.5 21M21 9L16 15L21 21" fill="none" stroke="#2a2a2a" stroke-width="2"/></svg>
<svg class="a" style="left:1618.6px;top:970.7px" width="30" height="30"><path d="M9 9L14 15L9 21M13.5 9L18.5 15L13.5 21" fill="none" stroke="#2a2a2a" stroke-width="2"/></svg>
<div class="t" style="left:1397.50px;top:972.63px;font-size:28.20px;line-height:28.20px;color:#303030;transform:scaleX(1.0847);transform-origin:0 0;-webkit-text-stroke:0.7px #303030;">Back</div>
<div class="t" style="left:1535.00px;top:972.85px;font-size:28.05px;line-height:28.05px;color:#303030;transform:scaleX(1.0992);transform-origin:0 0;-webkit-text-stroke:0.7px #303030;">Next</div>
<svg class="a" style="left:1613px;top:920px" width="52" height="52"><g transform="translate(27,27.3)" fill="#000" opacity="0.45"><rect x="-3.3" y="-17" width="6.6" height="34" rx="1.2" transform="rotate(0)"/><rect x="-3.3" y="-17" width="6.6" height="34" rx="1.2" transform="rotate(60)"/><rect x="-3.3" y="-17" width="6.6" height="34" rx="1.2" transform="rotate(-60)"/></g><g transform="translate(25.5,25.6)" fill="#e21414"><rect x="-3.3" y="-17" width="6.6" height="34" rx="1.2" transform="rotate(0)"/><rect x="-3.3" y="-17" width="6.6" height="34" rx="1.2" transform="rotate(60)"/><rect x="-3.3" y="-17" width="6.6" height="34" rx="1.2" transform="rotate(-60)"/></g></svg>
<div class="a" style="left:1667px;top:36px;width:3px;height:969px;background:linear-gradient(90deg,#262626,#1a1a1a)"></div>
</body></html>
